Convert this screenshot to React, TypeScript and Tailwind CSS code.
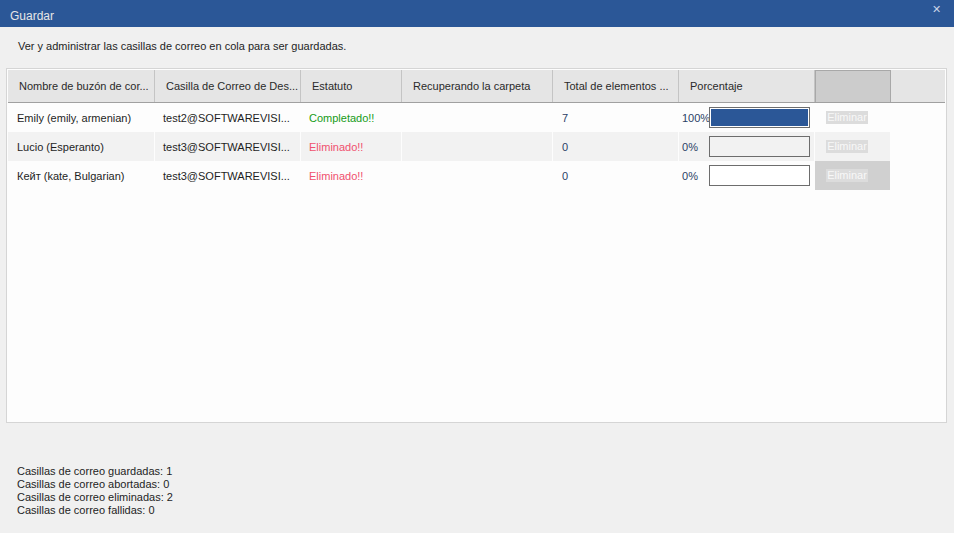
import React from "react";

const cols = [147, 146, 101, 151, 126, 136, 76];

function Bar({ pct, bg }: { pct: number; bg: string }) {
  return (
    <div className={`w-[101px] h-[21px] border border-[#6d6d6d] p-px ${bg}`}>
      {pct > 0 && <div className="h-full bg-[#2b5797]" style={{ width: `${pct}%` }} />}
    </div>
  );
}

const rows = [
  { name: "Emily (emily, armenian)", mail: "test2@SOFTWAREVISI...", status: "Completado!!", ok: true, total: "7", pct: 100, rowBg: "bg-[#fdfdfd]", delBg: "bg-[#fdfdfd]", barBg: "bg-white" },
  { name: "Lucio (Esperanto)", mail: "test3@SOFTWAREVISI...", status: "Eliminado!!", ok: false, total: "0", pct: 0, rowBg: "bg-[#f2f2f2]", delBg: "bg-[#f2f2f2]", barBg: "bg-[#f2f2f2]" },
  { name: "Кейт (kate, Bulgarian)", mail: "test3@SOFTWAREVISI...", status: "Eliminado!!", ok: false, total: "0", pct: 0, rowBg: "bg-[#fdfdfd]", delBg: "bg-[#d0d0d0]", barBg: "bg-white" },
];

export default function App() {
  return (
    <div className="w-[954px] h-[533px] bg-[#f0f0f0] flex flex-col text-[11px] text-[#1e1e1e]" style={{ fontFamily: '"Liberation Sans", Arial, sans-serif' }}>
      <div className="h-[27px] bg-[#2b5797] flex items-start justify-between text-[#e6e6e6]">
        <span className="pl-[10px] pt-[7px] text-[12px]">Guardar</span>
        <span className="pr-[13px] pt-[1px] text-[11px] text-[#c9d3e6]">✕</span>
      </div>
      <div className="pl-[18px] pt-[11px] h-[41px]">Ver y administrar las casillas de correo en cola para ser guardadas.</div>
      <div className="ml-[6px] w-[941px] h-[355px] border border-[#d5d5d5] bg-[#fdfdfd] p-px flex flex-col">
        <div className="h-[33px] flex bg-[#e5e5e5] border-b border-[#a0a0a0] text-[#2a2a2a]">
          {["Nombre de buzón de cor...", "Casilla de Correo de Des...", "Estatuto", "Recuperando la carpeta", "Total de elementos ...", "Porcentaje"].map((h, i) => (
            <div key={h} className="h-full flex items-center pl-[11px] border-r border-[#c4c4c4] whitespace-nowrap overflow-hidden" style={{ width: cols[i] }}>
              {h}
            </div>
          ))}
          <div className="w-[76px] h-full bg-[#cccccc] border border-b-0 border-[#a8a8a8]" />
          <div className="flex-1" />
        </div>
        {rows.map((r) => (
          <div key={r.name} className="h-[29px] flex gap-px">
            <div className={`w-[146px] flex items-center pl-[9px] pt-px ${r.rowBg}`}>{r.name}</div>
            <div className={`w-[145px] flex items-center pl-[8px] pt-px ${r.rowBg}`}>{r.mail}</div>
            <div className={`w-[100px] flex items-center pl-[8px] pt-px ${r.rowBg} ${r.ok ? "text-[#169b16]" : "text-[#f0506e]"}`}>{r.status}</div>
            <div className={`w-[150px] ${r.rowBg}`} />
            <div className={`w-[125px] flex items-center pl-[9px] pt-px text-[#2b3f66] ${r.rowBg}`}>{r.total}</div>
            <div className={`w-[135px] flex items-center pl-[3px] text-[#2b3f66] ${r.rowBg}`}>
              <span className="w-[27px] pt-px">{r.pct}%</span>
              <Bar pct={r.pct} bg={r.barBg} />
            </div>
            <div className={`w-[75px] flex items-center pl-[11px] ${r.delBg}`}>
              <span className="h-[13px] w-[42px] bg-[#dcdcdc] text-[#f8f8f8] flex items-center justify-center text-[11px]">Eliminar</span>
            </div>
          </div>
        ))}
      </div>
      <div className="pl-[17px] pt-[42px] leading-[13px]">
        <div>Casillas de correo guardadas: 1</div>
        <div>Casillas de correo abortadas: 0</div>
        <div>Casillas de correo eliminadas: 2</div>
        <div>Casillas de correo fallidas: 0</div>
      </div>
    </div>
  );
}
